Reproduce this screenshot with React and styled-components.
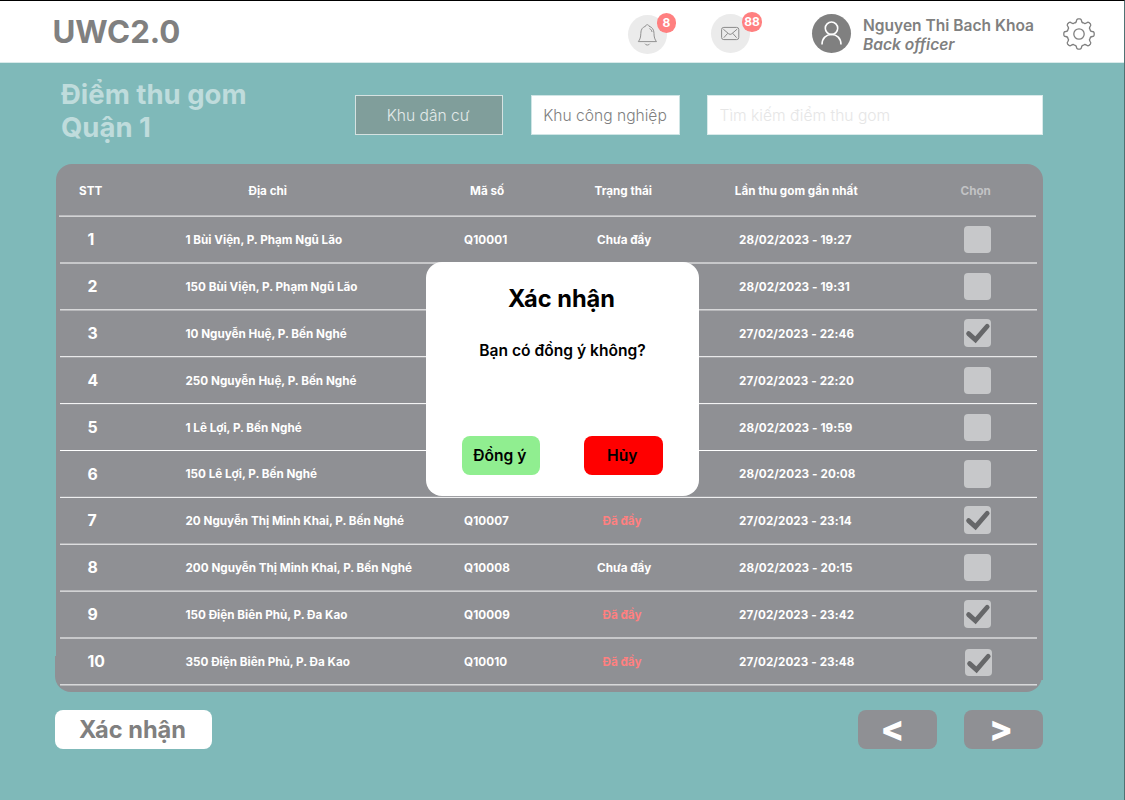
import React from "react";
import styled, { createGlobalStyle } from "styled-components";

const GlobalStyle = createGlobalStyle`
  *, *::before, *::after { box-sizing: border-box; }
  body { margin: 0; background: #7fb9b9; font-family: Inter, sans-serif; overflow: hidden; }
  button, input { font-family: inherit; margin: 0; }
`;

const Page = styled.div`
  width: 1125px;
  height: 800px;
  background: #7fb9b9;
  border-top: 1px solid #000;
  border-right: 1px solid #4f7273;
  position: relative;
  white-space: nowrap;
`;

const Header = styled.header`
  height: 62px;
  background: #fff;
  border-bottom: 1px solid #d9eaea;
  display: flex;
  align-items: flex-start;
`;

const Brand = styled.h1`
  margin: 11px 0 0 52.5px;
  width: 575.5px;
  font-size: 31.25px;
  line-height: 40px;
  font-weight: 700;
  color: #808080;
`;

const Bubble = styled.div`
  position: relative;
  width: 39px;
  height: 39px;
  margin: ${(p) => p.$top}px 44px 0 0;
  border-radius: 50%;
  background: #ebebeb;
  display: flex;
  align-items: center;
  justify-content: center;
`;

const Badge = styled.span`
  position: absolute;
  left: ${(p) => p.$left}px;
  top: -2px;
  width: 19.5px;
  height: 19.5px;
  border-radius: 50%;
  background: #ff8080;
  color: #fff;
  font-size: 12px;
  font-weight: 700;
  line-height: 20px;
  text-align: center;
`;

const Avatar = styled.div`
  width: 39px;
  height: 39px;
  margin: 13px 12.5px 0 17.5px;
  border-radius: 50%;
  background: #808080;
  display: flex;
`;

const Profile = styled.div`
  width: 198.5px;
  margin-top: 15px;
  color: #808080;
  font-size: 15.55px;
  line-height: 19px;
  font-weight: 600;
`;

const Role = styled.div`
  font-style: italic;
`;

const SettingsButton = styled.div`
  margin-top: 15.5px;
  height: 34px;
`;

const Filters = styled.section`
  height: 101px;
  display: flex;
  align-items: flex-start;
`;

const Title = styled.h2`
  margin: 15px 0 0 61px;
  width: 294px;
  font-size: 27.5px;
  line-height: 33px;
  font-weight: 700;
  color: #bfdcdc;
`;

const FilterButton = styled.button`
  width: ${(p) => (p.$active ? 148 : 149)}px;
  height: 40px;
  margin: 32px ${(p) => (p.$active ? 28 : 27)}px 0 0;
  padding: 0 ${(p) => (p.$active ? 2 : 1)}px 0 0;
  border: 1px solid ${(p) => (p.$active ? "#d5e2e1" : "#cfe5e5")};
  background: ${(p) => (p.$active ? "#809e9b" : "#fff")};
  color: ${(p) => (p.$active ? "#e4ebea" : "#808080")};
  font-size: 15.6px;
  font-weight: 300;
`;

const Search = styled.input`
  width: 336px;
  height: 40px;
  margin: 32px 0 0;
  padding: 0 11.5px;
  border: 1px solid #d9eaea;
  background: #fff;
  font-size: 15.6px;
  font-weight: 300;
  &::placeholder { color: #e6e6e6; opacity: 1; }
`;

const Table = styled.section`
  position: relative;
  isolation: isolate;
  margin-left: 55px;
  width: 988px;
  height: 528px;
  &::before {
    content: "";
    position: absolute;
    z-index: -1;
    inset: -0.5px 0 12px 0.7px;
    border-radius: 16px 16px 0 0;
    background: #8f9094;
  }
  &::after {
    content: "";
    position: absolute;
    z-index: -1;
    left: 0;
    right: 0.7px;
    bottom: 0;
    height: 36px;
    border-radius: 0 0 16px 16px;
    background: #8f9094;
  }
`;

const Row = styled.div`
  height: ${(p) => p.$height}px;
  display: grid;
  grid-template-columns: 130.5px 278.5px 133px 142px 225px 60px;
  align-items: center;
  color: #fff;
  font-size: 11.7px;
  font-weight: 700;
`;

const HeadRow = styled(Row)`
  grid-template-columns: 193.5px 221.5px 124.5px 140.3px 225.7px 60px;
  padding-top: 2px;
`;

const Divider = styled.div`
  height: 2px;
  width: 977px;
  margin: 0 0 -2px ${(p) => (p.$first ? 4 : 5)}px;
  background: linear-gradient(
    rgba(255, 255, 255, ${(p) => 1 - p.$shift}) 50%,
    rgba(255, 255, 255, ${(p) => p.$shift}) 50%
  );
`;

const HeadCell = styled.div`
  padding-left: ${(p) => p.$indent || 0}px;
  color: ${(p) => (p.$muted ? "#c2c3c5" : "#fff")};
`;

const Index = styled.div`
  padding: 2px 0 0 32.5px;
  font-size: 15.8px;
`;

const Cell = styled.div`
  padding-top: 2px;
  letter-spacing: ${(p) => (p.$numeric ? 0.08 : 0)}px;
`;

const Status = styled(Cell)`
  width: 54px;
  margin-left: ${(p) => (p.$full ? -2 : 0)}px;
  text-align: center;
  color: ${(p) => (p.$full ? "#ff8080" : "#fff")};
`;

const Checkbox = styled.div`
  width: 27.5px;
  height: 27.5px;
  margin-top: ${(p) => (p.$last ? 4 : p.$checked ? 0.5 : 2)}px;
  margin-left: ${(p) => (p.$last ? 0.5 : -0.4)}px;
  border-radius: 4px;
  background: #c7c8ca;
  svg { display: block; }
`;

const Actions = styled.footer`
  margin: 18px 0 0 55px;
  width: 988px;
  display: flex;
`;

const SubmitButton = styled.button`
  width: 157px;
  height: 39px;
  margin-right: auto;
  padding: 0 2px 0 0;
  border: 0;
  border-radius: 8px;
  background: #fff;
  color: #808080;
  font-size: 23.6px;
  font-weight: 700;
`;

const PageButton = styled.button`
  width: 79px;
  height: 39px;
  margin-left: 27px;
  padding: 0 ${(p) => p.$shift}px 2px 0;
  border: 0;
  border-radius: 8px;
  background: #8f9094;
  color: #fff;
  font-size: 35px;
  line-height: 37px;
  font-weight: 800;
`;

const Dialog = styled.div`
  position: absolute;
  left: 426px;
  top: 261px;
  width: 273px;
  height: 234px;
  border-radius: 16px;
  background: #fff;
  color: #000;
  text-align: center;
  font-weight: 700;
`;

const DialogTitle = styled.div`
  padding: 22px 2px 0 0;
  font-size: 23.6px;
  line-height: 29px;
`;

const DialogText = styled.div`
  margin-top: 28px;
  font-size: 15.6px;
  line-height: 20px;
  font-weight: 640;
`;

const DialogActions = styled.div`
  margin: 75px 1px 0 0;
  display: flex;
  justify-content: center;
  gap: 44px;
`;

const DialogButton = styled.button`
  width: 78.5px;
  height: 39px;
  padding: 0 2px 0 0;
  border: 0;
  border-radius: 8px;
  background: ${(p) => p.$color};
  color: #000;
  font-size: 15.6px;
  font-weight: 640;
`;

const rows = [
  ["1 Bùi Viện, P. Phạm Ngũ Lão", "Q10001", false, "28/02/2023 - 19:27", false],
  ["150 Bùi Viện, P. Phạm Ngũ Lão", "Q10002", false, "28/02/2023 - 19:31", false],
  ["10 Nguyễn Huệ, P. Bến Nghé", "Q10003", true, "27/02/2023 - 22:46", true],
  ["250 Nguyễn Huệ, P. Bến Nghé", "Q10004", false, "27/02/2023 - 22:20", false],
  ["1 Lê Lợi, P. Bến Nghé", "Q10005", false, "28/02/2023 - 19:59", false],
  ["150 Lê Lợi, P. Bến Nghé", "Q10006", false, "28/02/2023 - 20:08", false],
  ["20 Nguyễn Thị Minh Khai, P. Bến Nghé", "Q10007", true, "27/02/2023 - 23:14", true],
  ["200 Nguyễn Thị Minh Khai, P. Bến Nghé", "Q10008", false, "28/02/2023 - 20:15", false],
  ["150 Điện Biên Phủ, P. Đa Kao", "Q10009", true, "27/02/2023 - 23:42", true],
  ["350 Điện Biên Phủ, P. Đa Kao", "Q10010", true, "27/02/2023 - 23:48", true],
];

const shifts = [0.6, 0.5, 0.35, 0.2, 0.1, 0, 0.85, 0.7, 0.6, 0.5, 0.35];

function gearPath() {
  const pt = (r, deg) => {
    const a = (deg * Math.PI) / 180;
    return `${(17 + r * Math.sin(a)).toFixed(2)} ${(17 - r * Math.cos(a)).toFixed(2)}`;
  };
  let d = `M${pt(15.2, -4)}`;
  for (let i = 0; i < 8; i++) {
    const a = i * 45;
    d += `L${pt(15.2, a + 4)}Q${pt(15.1, a + 9)} ${pt(13.6, a + 10.5)}`;
    d += `Q${pt(11.4, a + 14)} ${pt(12, a + 22.5)}Q${pt(11.4, a + 31)} ${pt(13.6, a + 34.5)}`;
    d += `Q${pt(15.1, a + 36)} ${pt(15.2, a + 41)}`;
  }
  return d + "Z";
}

const Gear = () => (
  <svg width="34" height="34" viewBox="0 0 34 34" fill="none" stroke="#808080" strokeWidth="1.3">
    <path d={gearPath()} />
    <circle cx="17" cy="17" r="5.2" />
  </svg>
);

const Bell = () => (
  <svg width="39" height="39" viewBox="0 0 39 39" fill="none" stroke="#929292" strokeWidth="1">
    <path d="M10.3 26.6C12 24.6 12.8 22 12.8 18.5C12.8 14.5 14.5 12.2 17.6 11.2C17.8 9.2 20.8 9.2 21 11.2C24.2 12.2 26 14.5 26 18.5C26 22 26.8 24.6 28.5 26.6Z" />
    <path d="M17 28.7C17.7 30.5 21 30.5 21.8 28.7M21.5 13.6C23.2 14.4 23.8 15.5 24 17" />
  </svg>
);

const Mail = () => (
  <svg width="39" height="39" viewBox="0 0 39 39" fill="none" stroke="#8a8a8a" strokeWidth="1">
    <rect x="10.6" y="13.4" width="17.2" height="12.2" rx="2.2" />
    <path d="M12.3 15.2L17.7 19.8Q19.2 21 20.7 19.8L26.1 15.2M12.8 23.7L16.7 19.3M25.6 23.7L21.7 19.3" />
  </svg>
);

const User = () => (
  <svg width="39" height="39" viewBox="0 0 39 39" fill="none" stroke="#fff" strokeWidth="1.6">
    <circle cx="19.5" cy="14.2" r="6.2" />
    <path d="M10 30.5C10 24.2 14.2 20.5 19.5 20.5C24.8 20.5 29 24.2 29 30.5" />
  </svg>
);

const Check = () => (
  <svg width="27" height="27" viewBox="0 0 27 27" fill="none" stroke="#666769" strokeWidth="4.8" strokeLinecap="round" strokeLinejoin="miter">
    <path d="M4.6 14.6L11.5 20.8L23.2 7.2" />
  </svg>
);

export default function App() {
  return (
    <>
      <GlobalStyle />
      <Page>
        <Header>
          <Brand>UWC2.0</Brand>
          <Bubble $top={14}>
            <Bell />
            <Badge $left={28.7}>8</Badge>
          </Bubble>
          <Bubble $top={13}>
            <Mail />
            <Badge $left={31.2}>88</Badge>
          </Bubble>
          <Avatar><User /></Avatar>
          <Profile>
            <div>Nguyen Thi Bach Khoa</div>
            <Role>Back officer</Role>
          </Profile>
          <SettingsButton><Gear /></SettingsButton>
        </Header>
        <Filters>
          <Title>Điểm thu gom<br />Quận 1</Title>
          <FilterButton $active>Khu dân cư</FilterButton>
          <FilterButton>Khu công nghiệp</FilterButton>
          <Search placeholder="Tìm kiếm điểm thu gom" />
        </Filters>
        <Table>
          <HeadRow $height={51}>
            <HeadCell $indent={24}>STT</HeadCell>
            <HeadCell>Địa chỉ</HeadCell>
            <HeadCell>Mã số</HeadCell>
            <HeadCell>Trạng thái</HeadCell>
            <HeadCell>Lần thu gom gần nhất</HeadCell>
            <HeadCell $muted>Chọn</HeadCell>
          </HeadRow>
          <Divider $first $shift={shifts[0]} />
          {rows.map(([address, code, full, date, checked], i) => (
            <React.Fragment key={code}>
              <Row $height={i === 5 ? 46 : 47}>
                <Index>{i + 1}</Index>
                <Cell>{address}</Cell>
                <Cell $numeric>{code}</Cell>
                <Status $full={full}>{full ? "Đã đầy" : "Chưa đầy"}</Status>
                <Cell $numeric>{date}</Cell>
                <Checkbox $checked={checked} $last={i === 9}>{checked && <Check />}</Checkbox>
              </Row>
              <Divider $shift={shifts[i + 1]} />
            </React.Fragment>
          ))}
        </Table>
        <Actions>
          <SubmitButton>Xác nhận</SubmitButton>
          <PageButton $shift={10}>&lt;</PageButton>
          <PageButton $shift={5}>&gt;</PageButton>
        </Actions>
        <Dialog>
          <DialogTitle>Xác nhận</DialogTitle>
          <DialogText>Bạn có đồng ý không?</DialogText>
          <DialogActions>
            <DialogButton $color="#90ee90">Đồng ý</DialogButton>
            <DialogButton $color="#ff0000">Hủy</DialogButton>
          </DialogActions>
        </Dialog>
      </Page>
    </>
  );
}
